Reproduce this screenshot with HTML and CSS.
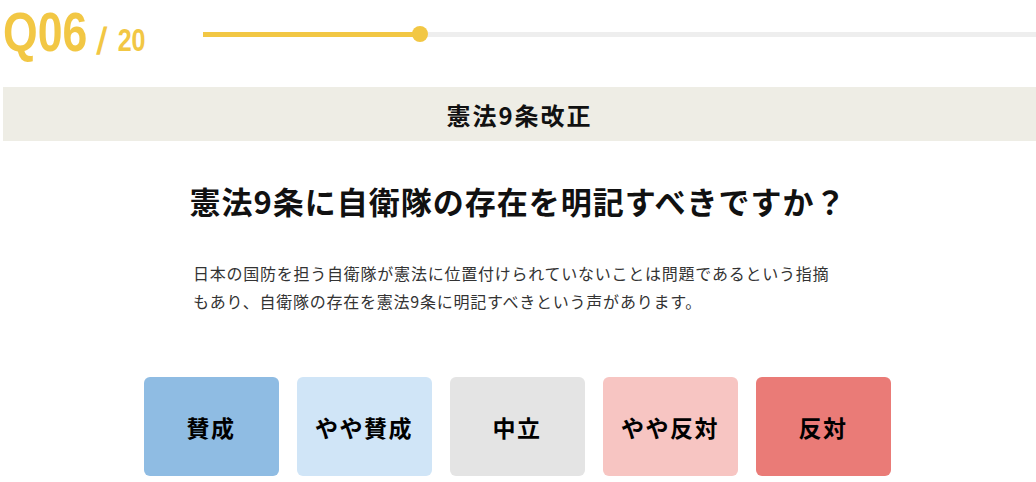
FILE: index.html
```html
<!DOCTYPE html>
<html lang="ja">
<head>
<meta charset="utf-8">
<link rel="stylesheet" href="styles.css">
</head>
<body>
<div class="page">
  <header class="header">
    <div class="score"><div class="score-inner"><span class="qnum">Q06</span><span class="slash">/</span><span class="total">20</span></div></div>
    <div class="bar">
      <div class="bar-fill" style="width:217px"><span class="bar-dot"></span></div>
    </div>
  </header>
  <div class="band"><h2 class="band-title">憲法9条改正</h2></div>
  <h1 class="question">憲法9条に自衛隊の存在を明記すべきですか？</h1>
  <p class="desc">日本の国防を担う自衛隊が憲法に位置付けられていないことは問題であるという指摘もあり、自衛隊の存在を憲法9条に明記すべきという声があります。</p>
  <div class="answers">
    <button class="answer a1">賛成</button>
    <button class="answer a2">やや賛成</button>
    <button class="answer a3">中立</button>
    <button class="answer a4">やや反対</button>
    <button class="answer a5">反対</button>
  </div>
</div>
</body>
</html>
```
FILE: styles.css
```css
html, body {
  margin: 0;
  padding: 0;
  background: #fff;
}
body {
  font-family: "Noto Sans CJK JP", "Noto Sans", sans-serif;
  color: #222;
}
.header {
  display: flex;
  align-items: center;
  height: 68px;
  margin-left: 3px;
}
.score {
  width: 200px;
  flex: none;
  height: 68px;
  display: flex;
  align-items: center;
}
.score-inner {
  display: flex;
  align-items: baseline;
  color: #f2c744;
  font-family: "Liberation Sans", Arial, sans-serif;
  font-weight: bold;
  line-height: 1;
  transform: scaleX(0.81);
  transform-origin: left center;
  white-space: nowrap;
  margin-top: -3px;
}
.qnum {
  font-size: 55px;
}
.slash {
  font-size: 38px;
  margin-left: 13px;
  display: inline-block;
  transform: skewX(-8deg) translateY(3px);
}
.total {
  font-size: 31px;
  margin-left: 14px;
}
.bar {
  flex: 1;
  height: 5px;
  background: #eeeeee;
  position: relative;
}
.bar-fill {
  height: 100%;
  background: #f2c744;
  position: relative;
}
.bar-dot {
  position: absolute;
  right: -8px;
  top: 50%;
  width: 16px;
  height: 16px;
  margin-top: -8px;
  border-radius: 50%;
  background: #f2c744;
}
.band {
  margin: 19px 0 0 3px;
  height: 54px;
  background: #eeede5;
  display: flex;
  align-items: center;
  justify-content: center;
}
.band-title {
  margin: 0;
  font-size: 24px;
  font-weight: bold;
  letter-spacing: 2px;
  color: #111;
}
.question {
  margin: 40px 0 0;
  text-align: center;
  font-size: 31px;
  line-height: 40px;
  font-weight: bold;
  letter-spacing: 1px;
  color: #111;
}
.desc {
  width: 650px;
  margin: 38px auto 0;
  font-size: 16px;
  line-height: 28px;
  letter-spacing: 0.76px;
  color: #333;
}
.answers {
  margin-top: 62px;
  display: flex;
  justify-content: center;
  gap: 18px;
  padding-right: 2px;
}
.answer {
  width: 135px;
  height: 99px;
  border: none;
  border-radius: 6px;
  font-family: "Noto Sans CJK JP", sans-serif;
  font-size: 23px;
  font-weight: bold;
  letter-spacing: 1.5px;
  color: #000;
  padding: 0;
}
.a1 { background: #8fbce3; }
.a2 { background: #d0e5f7; }
.a3 { background: #e4e4e4; }
.a4 { background: #f7c5c2; }
.a5 { background: #ea7b77; }
```
